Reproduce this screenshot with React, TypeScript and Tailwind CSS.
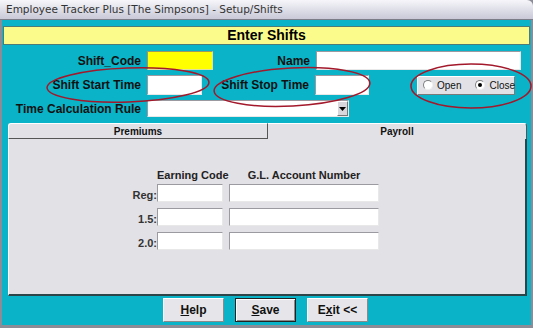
import React from "react";

const font = { fontFamily: '"Liberation Sans", Arial, sans-serif' };

function Field({ className = "" }: { className?: string }) {
  return (
    <div
      className={`h-full border border-t-[#9a9aa0] border-l-[#9a9aa0] border-b-[#e8e8e8] border-r-[#e8e8e8] bg-white ${className}`}
    />
  );
}

function Radio({ checked }: { checked?: boolean }) {
  return (
    <span className="relative inline-flex w-[10px] h-[10px] rounded-full bg-white border border-t-[#808080] border-l-[#808080] border-b-[#f0f0f0] border-r-[#f0f0f0] items-center justify-center">
      {checked && <span className="w-[4px] h-[4px] rounded-full bg-black" />}
    </span>
  );
}

function WinButton({ children, isDefault }: { children: React.ReactNode; isDefault?: boolean }) {
  return (
    <div
      className={`w-[61px] h-[24px] flex items-center justify-center bg-[#e6e6ea] text-[12px] font-bold text-[#111] border ${
        isDefault
          ? "border-[#222] shadow-[inset_1px_1px_0_#fff,inset_-1px_-1px_0_#888]"
          : "border-t-white border-l-white border-b-[#8a8a8a] border-r-[#8a8a8a]"
      }`}
    >
      {children}
    </div>
  );
}

export default function App() {
  const rows = ["Reg:", "1.5:", "2.0:"];
  return (
    <div className="relative w-[533px] h-[328px] overflow-hidden bg-[#8c8c96]" style={font}>
      {/* Title bar */}
      <div
        className="h-[20px] rounded-tr-[6px] bg-gradient-to-b from-[#f6f6fa] to-[#c9c9d8] border-b border-[#7c7c88] flex items-center pl-[6px] text-[10.5px] text-[#333]"
        style={{ fontFamily: '"DejaVu Sans", Verdana, sans-serif' }}
      >
        Employee Tracker Plus [The Simpsons] - Setup/Shifts
      </div>

      {/* Body */}
      <div className="ml-[2px] mr-[2px] h-[305px] bg-[#0ab3c7] pt-[6px] flex flex-col">
        {/* Header */}
        <div className="mx-[1px] h-[19px] bg-[#fbfb8c] border border-[#4d7b78] flex items-center justify-center text-[14px] font-bold text-black">
          Enter Shifts
        </div>

        <div className="flex flex-col gap-[5px] mt-[6px] text-[12px] font-bold text-[#111]">
          {/* Row 1 */}
          <div className="flex h-[19px] items-center">
            <div className="w-[139px] text-right">Shift_Code</div>
            <div className="ml-[6px] w-[66px] h-full bg-[#ffff00] border border-t-[#9a9a60] border-l-[#9a9a60] border-b-[#e0e0a0] border-r-[#e0e0a0]" />
            <div className="w-[97px] text-right">Name</div>
            <div className="ml-[6px] w-[205px] h-full">
              <Field />
            </div>
          </div>
          {/* Row 2 */}
          <div className="flex h-[20px] items-center">
            <div className="w-[139px] text-right">Shift Start Time</div>
            <div className="ml-[6px] w-[55px] h-full">
              <Field />
            </div>
            <div className="w-[107px] text-right">Shift Stop Time</div>
            <div className="ml-[6px] w-[54px] h-full">
              <Field />
            </div>
            <div className="ml-[48px] w-[98px] h-[19px] bg-[#e2e1e6] border border-t-white border-l-white border-b-[#7a7a7a] border-r-[#7a7a7a] flex items-center text-[10px] font-normal">
              <div className="flex items-center gap-[4px] pl-[5px]">
                <Radio />
                <span>Open</span>
              </div>
              <div className="flex items-center gap-[4px] ml-[14px]">
                <Radio checked />
                <span>Close</span>
              </div>
            </div>
          </div>
          {/* Row 3 */}
          <div className="flex h-[17px] items-center">
            <div className="w-[139px] text-right">Time Calculation Rule</div>
            <div className="ml-[6px] w-[202px] h-full flex border border-t-[#9a9aa0] border-l-[#9a9aa0] border-b-[#e8e8e8] border-r-[#e8e8e8] bg-white">
              <div className="flex-1" />
              <div className="w-[11px] h-full bg-[#d8d8dc] border border-t-white border-l-white border-b-[#777] border-r-[#777] flex items-center justify-center">
                <svg width="7" height="4" viewBox="0 0 7 4">
                  <path d="M0 0h7L3.5 4z" fill="#000" />
                </svg>
              </div>
            </div>
          </div>
        </div>

        {/* Tab panel */}
        <div className="ml-[6px] mt-[6px] w-[519px] flex flex-col">
          <div className="flex h-[16px] text-[10px] font-bold text-[#111]">
            <div className="w-[260px] bg-[#e2e1e6] border border-t-white border-l-white border-r-[#555] border-b-[#555] rounded-tl-[3px] flex items-center justify-center">
              Premiums
            </div>
            <div className="flex-1 bg-[#e2e1e6] border-t border-r border-t-white border-r-[#555] rounded-tr-[3px] flex items-center justify-center">
              Payroll
            </div>
          </div>
          <div className="h-[157px] bg-[#e2e1e6] border-l border-l-white border-r-2 border-b-2 border-r-[#2d4448] border-b-[#2d4448] pt-[30px]">
            <div className="flex text-[11px] font-bold text-[#222] h-[14px] items-end whitespace-nowrap">
              <div className="w-[148px]" />
              <div className="w-[66px] text-center">Earning Code</div>
              <div className="ml-[6px] w-[150px] text-center">G.L. Account Number</div>
            </div>
            <div className="flex flex-col gap-[6px] mt-[1px]">
              {rows.map((r) => (
                <div key={r} className="flex h-[18px] items-end">
                  <div className="w-[148px] text-right text-[11px] font-bold text-[#333] leading-[14px]">{r}</div>
                  <div className="w-[66px] h-full">
                    <Field />
                  </div>
                  <div className="ml-[6px] w-[150px] h-full">
                    <Field />
                  </div>
                </div>
              ))}
            </div>
          </div>
        </div>

        {/* Buttons */}
        <div className="flex justify-center gap-[11px] mt-[2px] pr-[2px]">
          <WinButton>
            <span className="underline">H</span>elp
          </WinButton>
          <WinButton isDefault>
            <span className="underline">S</span>ave
          </WinButton>
          <WinButton>
            E<span className="underline">x</span>it &lt;&lt;
          </WinButton>
        </div>
      </div>

      {/* Red annotation ellipses */}
      <svg className="absolute inset-0 pointer-events-none" width="533" height="328">
        <ellipse cx="128" cy="85" rx="81" ry="17" fill="none" stroke="#a3182a" strokeWidth="1.5" transform="rotate(-2 128 85)" />
        <ellipse cx="292" cy="87" rx="78" ry="19" fill="none" stroke="#a3182a" strokeWidth="1.5" transform="rotate(-3 292 87)" />
        <ellipse cx="471" cy="86" rx="60" ry="22" fill="none" stroke="#a3182a" strokeWidth="1.5" />
      </svg>
    </div>
  );
}
